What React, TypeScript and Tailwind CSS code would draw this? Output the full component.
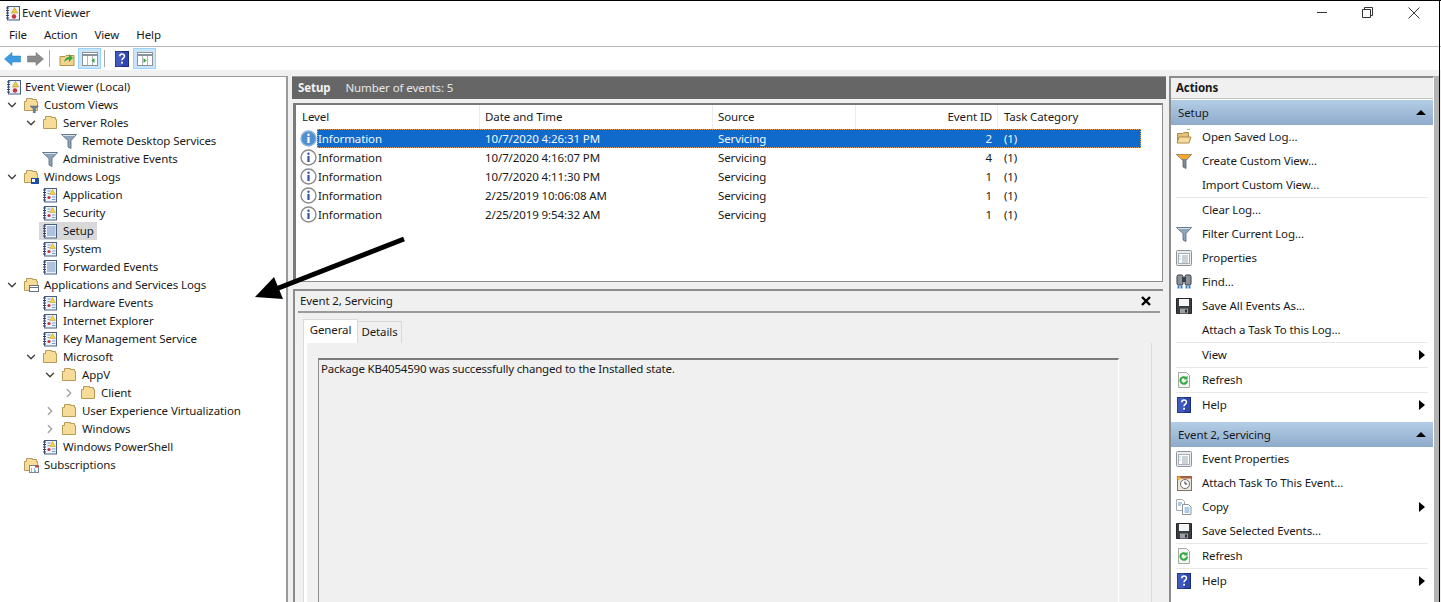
import { ChevronDown, ChevronRight } from "lucide-react";

type IconName =
  | "viewer" | "folder" | "folderFilter" | "folderLog" | "folderApps" | "folderSubs"
  | "filter" | "filterOrange" | "log" | "logPlain" | "open" | "props" | "find"
  | "save" | "refresh" | "help" | "clock" | "copy" | "none";

function Icon({ name }: { name: IconName }) {
  const notebook = (
    <>
      <rect x="2.500" y="1.500" width="12" height="13.500" fill="#eef3fb" stroke="#4a5f84" />
      <path d="M1 3h3M1 5.500h3M1 8h3M1 10.500h3M1 13h3" stroke="#2f3f5e" />
    </>
  );
  const folder = (
    <path d="M1.500 4.500h2v-3h6v1h4v2h1v9h-13z" fill="#f7dc98" stroke="#b79a58" />
  );
  switch (name) {
    case "viewer":
      return (
        <svg width="16" height="16" viewBox="0 0 16 16">
          {notebook}
          <path d="M9.500 2.500l3 5.500h-6z" fill="#f5cf3a" stroke="#a8841a" strokeWidth="0.500" />
          <circle cx="9" cy="11.500" r="2.200" fill="#c8323a" />
        </svg>
      );
    case "log":
      return (
        <svg width="16" height="16" viewBox="0 0 16 16">
          {notebook}
          <path d="M5.500 4h3M5.500 6.500h2M10 10h3.500M10 12.500h3.500" stroke="#7d9cc7" />
          <path d="M10.500 2.500l2.800 5h-5.600z" fill="#f5d33f" stroke="#b8931f" strokeWidth="0.500" />
          <circle cx="7" cy="10.500" r="1.600" fill="#c6303a" />
        </svg>
      );
    case "logPlain":
      return (
        <svg width="16" height="16" viewBox="0 0 16 16">
          {notebook}
          <path d="M5 4h8.500M5 6h8.500M5 8h8.500M5 10h8.500M5 12h8.500" stroke="#6f90bf" />
        </svg>
      );
    case "folder":
      return (
        <svg width="16" height="16" viewBox="0 0 16 16">
          {folder}
        </svg>
      );
    case "folderFilter":
      return (
        <svg width="16" height="16" viewBox="0 0 16 16">
          {folder}
          <path d="M7 9h8.500l-3.200 3v4h-2v-4z" fill="#6f8198" stroke="#4b5c73" strokeWidth="0.500" />
        </svg>
      );
    case "folderLog":
      return (
        <svg width="16" height="16" viewBox="0 0 16 16">
          {folder}
          <rect x="8" y="9" width="8" height="6" fill="#1f4fa3" />
          <rect x="9" y="10" width="3" height="3" fill="#fff" />
        </svg>
      );
    case "folderApps":
      return (
        <svg width="16" height="16" viewBox="0 0 16 16">
          {folder}
          <rect x="6.500" y="8.500" width="9" height="6" fill="#fff" stroke="#68727f" />
          <path d="M7 10.500h8" stroke="#68727f" />
        </svg>
      );
    case "folderSubs":
      return (
        <svg width="16" height="16" viewBox="0 0 16 16">
          {folder}
          <rect x="6.500" y="8.500" width="9" height="7" fill="#fff" stroke="#7b8794" />
          <path d="M12 9.500h3.500" stroke="#d33" strokeWidth="2" />
          <path d="M8 12h1M11 12h1M8 14h1M11 14h2" stroke="#2f62b5" />
        </svg>
      );
    case "filter":
      return (
        <svg width="16" height="16" viewBox="0 0 16 16">
          <path d="M0.500 1.500h15l-5.500 6v8l-3-1.500v-6.500z" fill="#8ea4b8" stroke="#4f6478" strokeWidth="0.800" />
          <path d="M2 2.500h12" stroke="#d6e0ea" />
        </svg>
      );
    case "filterOrange":
      return (
        <svg width="16" height="16" viewBox="0 0 16 16">
          <path d="M0.500 1.500h15l-5.500 6v8l-3-1.500v-6.500z" fill="#7e8b98" stroke="#56636f" strokeWidth="0.800" />
          <path d="M1 1.500h14l-4 4.500h-6z" fill="#f7a72c" />
        </svg>
      );
    case "open":
      return (
        <svg width="16" height="16" viewBox="0 0 16 16">
          <path d="M1.500 4.500h5l1-1h5v9h-11z" fill="#e3c27a" stroke="#a98a4a" />
          <path d="M1 14l2-6h12l-2 6z" fill="#f4dc9e" stroke="#a98a4a" />
          <path d="M11 0.500h3" stroke="#6fcf6a" />
        </svg>
      );
    case "props":
      return (
        <svg width="16" height="16" viewBox="0 0 16 16">
          <rect x="0.500" y="0.500" width="15" height="15" rx="1" fill="#e9ebee" stroke="#8d949c" />
          <rect x="2.500" y="3.500" width="11" height="10" fill="#fff" stroke="#a8aeb5" />
          <path d="M6 6h6M6 8h6M6 10h6M6 12h6" stroke="#9aa3ad" />
          <path d="M3.500 6h1M3.500 9h1" stroke="#35a3e0" />
        </svg>
      );
    case "find":
      return (
        <svg width="16" height="16" viewBox="0 0 16 16">
          <rect x="1" y="1" width="6" height="10" rx="1.500" fill="#8b929b" stroke="#33393f" />
          <rect x="9" y="1" width="6" height="10" rx="1.500" fill="#8b929b" stroke="#33393f" />
          <rect x="6" y="3" width="4" height="5" fill="#39404a" />
          <path d="M1.500 13h5M9.500 13h5" stroke="#3a7fc0" strokeWidth="3" strokeDasharray="2 1" />
        </svg>
      );
    case "save":
      return (
        <svg width="16" height="16" viewBox="0 0 16 16">
          <path d="M0.500 0.500h15v15h-15z" fill="#3a3d42" stroke="#25272b" />
          <rect x="3" y="1" width="10" height="7" fill="#f4f5f6" />
          <rect x="4" y="10.500" width="8" height="5" fill="#9aa0a8" />
          <rect x="9" y="11.500" width="2" height="3" fill="#2c2f33" />
        </svg>
      );
    case "refresh":
      return (
        <svg width="16" height="16" viewBox="0 0 16 16">
          <path d="M2.500 0.500h8l3 3v12h-11z" fill="#f5f6f4" stroke="#a4aaa4" />
          <path d="M11 8.500a3.300 3.300 0 1 1-1-2.400" fill="none" stroke="#2fa53a" strokeWidth="2" />
          <path d="M11.500 3.800v3.700h-3.700z" fill="#2fa53a" />
        </svg>
      );
    case "help":
      return (
        <svg width="16" height="16" viewBox="0 0 16 16">
          <rect x="1.500" y="0.500" width="13" height="15" fill="#2f48b0" stroke="#1b2c78" />
          <rect x="1.500" y="0.500" width="6.500" height="15" fill="#5068c8" opacity="0.600" />
          <path d="M5.800 5.200c0-3 4.600-3 4.600 0 0 2-2.300 2-2.300 4" fill="none" stroke="#fff" strokeWidth="1.600" />
          <rect x="7.200" y="10.800" width="1.800" height="1.800" fill="#fff" />
        </svg>
      );
    case "clock":
      return (
        <svg width="16" height="16" viewBox="0 0 16 16">
          <rect x="1.500" y="1.500" width="14" height="14" fill="#ece6da" stroke="#7c756a" />
          <path d="M1.500 1.500h14v2h-14z" fill="#b5562f" />
          <circle cx="9" cy="9" r="4.500" fill="#fff" stroke="#6d6d6d" />
          <path d="M9 6.500V9h2.200" fill="none" stroke="#333" />
          <path d="M3 0.500l1 2 2 .5-2 1-1 2-1-2-2-1 2-.5z" fill="#f7b52c" />
        </svg>
      );
    case "copy":
      return (
        <svg width="16" height="16" viewBox="0 0 16 16">
          <path d="M0.500 0.500h6l2 2v9h-8z" fill="#fff" stroke="#a5abb3" />
          <path d="M6.500 5.500h6l2.500 2.500v7.500h-8.500z" fill="#fff" stroke="#8c939c" />
          <path d="M2 4h4M2 6h3M8.500 9h5M8.500 11h5M8.500 13h5" stroke="#5b9bd5" />
        </svg>
      );
    default:
      return <span className="inline-block w-4 h-4" />;
  }
}

type TreeRow = { label: string; icon: IconName; depth: number; toggle?: "open" | "closed"; selected?: boolean };

const tree: TreeRow[] = [
  { label: "Event Viewer (Local)", icon: "viewer", depth: -1 },
  { label: "Custom Views", icon: "folderFilter", depth: 0, toggle: "open" },
  { label: "Server Roles", icon: "folder", depth: 1, toggle: "open" },
  { label: "Remote Desktop Services", icon: "filter", depth: 2 },
  { label: "Administrative Events", icon: "filter", depth: 1 },
  { label: "Windows Logs", icon: "folderLog", depth: 0, toggle: "open" },
  { label: "Application", icon: "log", depth: 1 },
  { label: "Security", icon: "log", depth: 1 },
  { label: "Setup", icon: "logPlain", depth: 1, selected: true },
  { label: "System", icon: "log", depth: 1 },
  { label: "Forwarded Events", icon: "logPlain", depth: 1 },
  { label: "Applications and Services Logs", icon: "folderApps", depth: 0, toggle: "open" },
  { label: "Hardware Events", icon: "log", depth: 1 },
  { label: "Internet Explorer", icon: "log", depth: 1 },
  { label: "Key Management Service", icon: "log", depth: 1 },
  { label: "Microsoft", icon: "folder", depth: 1, toggle: "open" },
  { label: "AppV", icon: "folder", depth: 2, toggle: "open" },
  { label: "Client", icon: "folder", depth: 3, toggle: "closed" },
  { label: "User Experience Virtualization", icon: "folder", depth: 2, toggle: "closed" },
  { label: "Windows", icon: "folder", depth: 2, toggle: "closed" },
  { label: "Windows PowerShell", icon: "log", depth: 1 },
  { label: "Subscriptions", icon: "folderSubs", depth: 0 },
];

const indent: Record<number, string> = {
  [-1]: "pl-[3px]",
  0: "pl-[5px]",
  1: "pl-[24px]",
  2: "pl-[43px]",
  3: "pl-[62px]",
};

function TreeItem({ row }: { row: TreeRow }) {
  return (
    <div className={`h-[18px] flex items-center ${indent[row.depth]}`}>
      {row.depth >= 0 && (
        <span className="w-[15px] h-[18px] flex items-center shrink-0">
          {row.toggle === "open" && <ChevronDown size={14} strokeWidth={2.4} className="text-[#404040]" />}
          {row.toggle === "closed" && <ChevronRight size={14} strokeWidth={2.2} className="text-[#a0a0a0]" />}
        </span>
      )}
      <span className={`flex items-center h-[18px] pl-[3px] pr-[3px] ${row.selected ? "bg-[#d9d9d9]" : ""}`}>
        <span className={`w-[16px] h-[16px] shrink-0 flex items-center ${row.depth === -1 ? "mr-0" : "mr-[2px]"}`}>
          <Icon name={row.icon} />
        </span>
        <span className="pl-[3px] leading-[18px] whitespace-nowrap">{row.label}</span>
      </span>
    </div>
  );
}

const events = [
  ["10/7/2020 4:26:31 PM", "2"],
  ["10/7/2020 4:16:07 PM", "4"],
  ["10/7/2020 4:11:30 PM", "1"],
  ["2/25/2019 10:06:08 AM", "1"],
  ["2/25/2019 9:54:32 AM", "1"],
];

function InfoIcon({ selected }: { selected: boolean }) {
  return (
    <svg width="17" height="17" viewBox="0 0 17 17" className="shrink-0">
      <circle cx="8.500" cy="8.500" r="7.500" fill={selected ? "#4f8fd0" : "#fff"} stroke={selected ? "#8fb4da" : "#8a8a8a"} strokeWidth="1.400" />
      <circle cx="8.500" cy="4.700" r="1.200" fill={selected ? "#fff" : "#3a55a8"} />
      <rect x="7.400" y="7" width="2.200" height="6" fill={selected ? "#fff" : "#3a55a8"} />
    </svg>
  );
}

type ActionRow = { label?: string; icon?: IconName; more?: boolean; sep?: boolean };

const setupActions: ActionRow[] = [
  { label: "Open Saved Log...", icon: "open" },
  { label: "Create Custom View...", icon: "filterOrange" },
  { label: "Import Custom View..." },
  { sep: true },
  { label: "Clear Log..." },
  { label: "Filter Current Log...", icon: "filter" },
  { label: "Properties", icon: "props" },
  { label: "Find...", icon: "find" },
  { label: "Save All Events As...", icon: "save" },
  { label: "Attach a Task To this Log..." },
  { sep: true },
  { label: "View", more: true },
  { sep: true },
  { label: "Refresh", icon: "refresh" },
  { sep: true },
  { label: "Help", icon: "help", more: true },
];

const eventActions: ActionRow[] = [
  { label: "Event Properties", icon: "props" },
  { label: "Attach Task To This Event...", icon: "clock" },
  { label: "Copy", icon: "copy", more: true },
  { label: "Save Selected Events...", icon: "save" },
  { sep: true },
  { label: "Refresh", icon: "refresh" },
  { sep: true },
  { label: "Help", icon: "help", more: true },
];

function ActionList({ rows }: { rows: ActionRow[] }) {
  return (
    <div>
      {rows.map((r, i) =>
        r.sep ? (
          <div key={i} className="h-[1px] mx-[5px] bg-[#e8e8e8]" />
        ) : (
          <div key={i} className="h-[24px] flex items-center pl-[5px] pr-[8px]">
            <span className="w-[16px] h-[16px] flex items-center shrink-0">
              {r.icon && <Icon name={r.icon} />}
            </span>
            <span className="ml-[10px] flex-1 whitespace-nowrap">{r.label}</span>
            {r.more && <span className="w-0 h-0 border-y-[5px] border-y-transparent border-l-[6px] border-l-black" />}
          </div>
        ),
      )}
    </div>
  );
}

function ActionBand({ label }: { label: string }) {
  return (
    <div className="h-[25px] flex items-center justify-between pl-[7px] pr-[7px] bg-gradient-to-b from-[#b4cde6] to-[#8fabcb]">
      <span>{label}</span>
      <span className="w-0 h-0 border-x-[5px] border-x-transparent border-b-[5px] border-b-black" />
    </div>
  );
}

export default function App() {
  return (
    <div className="relative w-[1441px] h-[602px] overflow-hidden bg-white text-[11.5px] tracking-[-0.1px] text-[#1a1a1a] font-['Noto_Sans','Open_Sans',sans-serif] flex flex-col">
      {/* Title bar */}
      <div className="h-[24px] border-t border-black flex items-center shrink-0">
        <span className="ml-[5px] mr-[1px] flex"><Icon name="viewer" /></span>
        <span className="pt-[1px]">Event Viewer</span>
        <div className="ml-auto flex items-center gap-[35px] pr-[21px]">
          <span className="w-[10px] h-[1px] bg-[#333]" />
          <svg width="11" height="11" viewBox="0 0 11 11"><path d="M2.500 2.500V.5h8v8h-2M.5 2.500h8v8h-8z" fill="none" stroke="#333" /></svg>
          <svg width="12" height="12" viewBox="0 0 12 12"><path d="M.5.5l11 11M11.500.5l-11 11" stroke="#333" /></svg>
        </div>
      </div>
      {/* Menu */}
      <div className="h-[23px] flex items-center gap-[17px] pl-[9px] border-b border-[#b8b8b8] shrink-0">
        <span>File</span><span>Action</span><span>View</span><span>Help</span>
      </div>
      {/* Toolbar */}
      <div className="h-[23px] flex items-center pl-[4px] shrink-0">
        <svg width="17" height="14" viewBox="0 0 17 14"><path d="M0.500 7l7.500-6.500v3.500h8.500v6h-8.500v3.500z" fill="#3d9be0" stroke="#2a78b8" strokeWidth="0.500" /></svg>
        <svg width="17" height="14" viewBox="0 0 17 14" className="ml-[6px]"><path d="M16.500 7l-7.500-6.500v3.500h-8.500v6h8.500v3.500z" fill="#8a8a8a" stroke="#6e6e6e" strokeWidth="0.500" /></svg>
        <span className="w-[1px] h-[17px] bg-[#a8a8a8] ml-[5px] mr-[9px]" />
        <span className="flex w-[16px]">
          <svg width="16" height="16" viewBox="0 0 16 16"><path d="M1 14.500v-9h5l1-1h8v10z" fill="#f1d58c" stroke="#b2954f" /><path d="M5 11c1-4 3-5 5-5V3l4 4-4 4V8.500c-2 0-3 1-5 2.500z" fill="#3aa54a" /></svg>
        </span>
        <span className="ml-[3px] w-[23px] h-[21px] flex items-center justify-center bg-[#cce4f7] border border-[#99d1ff]">
          <svg width="16" height="14" viewBox="0 0 16 14"><rect x="0.500" y="0.500" width="15" height="13" fill="#fff" stroke="#8a929a" /><path d="M1 3h14" stroke="#8a929a" strokeWidth="2" /><path d="M5.500 4v9M10.500 4v9" stroke="#b0b6bc" /><path d="M12.500 6v5l-3-2.500z" fill="#2fa53a" /></svg>
        </span>
        <span className="w-[1px] h-[17px] bg-[#a8a8a8] ml-[3px] mr-[9px]" />
        <span className="flex w-[16px]"><Icon name="help" /></span>
        <span className="ml-[3px] w-[23px] h-[21px] flex items-center justify-center bg-[#cce4f7] border border-[#99d1ff]">
          <svg width="16" height="14" viewBox="0 0 16 14"><rect x="0.500" y="0.500" width="15" height="13" fill="#fff" stroke="#8a929a" /><path d="M1 3h14" stroke="#8a929a" strokeWidth="2" /><path d="M5.500 4v9M10.500 4v9" stroke="#b0b6bc" /><path d="M6.500 6v5l3-2.500z" fill="#2fa53a" /></svg>
        </span>
      </div>
      {/* Panes */}
      <div className="flex-1 min-h-0 bg-[#f0f0f0] pt-[6px] flex">
        {/* Tree */}
        <div className="w-[288px] shrink-0 bg-white border-t border-r-2 border-[#9a9a9a] pt-[1px]">
          {tree.map((row) => (
            <TreeItem key={row.label} row={row} />
          ))}
        </div>
        {/* Centre */}
        <div className="ml-[4px] w-[874px] shrink-0 flex flex-col border-t border-[#9a9a9a]">
          <div className="h-[22px] shrink-0 bg-[#666666] text-white flex items-center pl-[6px]">
            <b className="font-bold text-[#f2f2f2]">Setup</b>
            <span className="ml-[15px] text-[#e6e6e6]">Number of events: 5</span>
          </div>
          <div className="mt-[4px] ml-[1px] mr-[3px] h-[179px] shrink-0 bg-white border border-[#8c8c8c] border-t-2 border-l-[3px] border-t-[#7a7a7a] border-l-[#7a7a7a]">
            <div className="grid grid-cols-[183px_233px_143px_143px_1fr] h-[24px] items-center">
              <span className="pl-[6px]">Level</span>
              <span className="pl-[5px] h-full flex items-center border-l border-[#ececec]">Date and Time</span>
              <span className="pl-[5px] h-full flex items-center border-l border-[#ececec]">Source</span>
              <span className="pr-[5px] h-full flex items-center justify-end border-l border-r border-[#ececec]">Event ID</span>
              <span className="pl-[6px]">Task Category</span>
            </div>
            <div className="w-[845px]">
              {events.map(([when, id], i) => (
                <div key={when} className="h-[19px] flex items-center relative pl-[4px]">
                  <InfoIcon selected={i === 0} />
                  <div className={`flex-1 h-[19px] grid grid-cols-[162px_233px_143px_143px_1fr] items-center ${i === 0 ? "bg-[#0f6acb] text-[#f4f8fd] outline-1 -outline-offset-1 outline-dotted outline-[#e0a060]" : ""}`}>
                    <span className="pl-[1px]">Information</span>
                    <span className="pl-[6px]">{when}</span>
                    <span className="pl-[6px]">Servicing</span>
                    <span className="pr-[6px] text-right">{id}</span>
                    <span className="pl-[6px]">(1)</span>
                  </div>
                </div>
              ))}
            </div>
          </div>
          {/* Detail */}
          <div className="mt-[7px] flex-1 min-h-0 border-t-2 border-l-2 border-[#8c8c8c] ml-[1px] mr-[3px] bg-[#f0f0f0]">
            <div className="h-[20px] mx-[3px] border-b-2 border-[#9a9a9a] box-content flex items-center justify-between pl-[2px] pr-[9px]">
              <span>Event 2, Servicing</span>
              <svg width="10" height="10" viewBox="0 0 10 10"><path d="M1 1l8 8M9 1l-8 8" stroke="#000" strokeWidth="2.400" /></svg>
            </div>
            <div className="ml-[8px] mr-[11px] mt-[6px] flex items-end">
              <span className="h-[24px] w-[55px] flex items-center justify-center pb-[4px] bg-white border border-b-0 border-[#d9d9d9]">General</span>
              <span className="h-[22px] w-[44px] flex items-center justify-center pb-[2px] border border-l-0 border-b-0 border-[#d9d9d9] bg-[#f0f0f0]">Details</span>
            </div>
            <div className="ml-[8px] mr-[11px] bg-white border border-t-0 border-[#dcdcdc] pl-[3px] h-[300px]">
              <div className="h-full bg-[#f0f0f0] pl-[11px] pr-[32px] pt-[15px]">
                <div className="h-[300px] border-t-2 border-l border-r border-t-[#7a7a7a] border-l-[#8c8c8c] border-r-white pl-[2px] leading-[17px] tracking-[-0.2px]">
                  Package KB4054590 was successfully changed to the Installed state.
                </div>
              </div>
            </div>
          </div>
        </div>
        {/* Actions */}
        <div className="ml-[3px] w-[265px] shrink-0 bg-white border-t-2 border-l-2 border-r border-[#8c8c8c] border-r-white">
          <div className="h-[21px] bg-[#f0f0f0] flex items-center pl-[5px] font-bold border-b border-[#c4c4c4]">Actions</div>
          <div className="mt-[1px]">
            <ActionBand label="Setup" />
            <ActionList rows={setupActions} />
          </div>
          <div className="mt-[5px]">
            <ActionBand label="Event 2, Servicing" />
            <ActionList rows={eventActions} />
          </div>
        </div>
        <div className="w-[5px] shrink-0 bg-[#b4b4b4]" />
        <div className="w-[1px] shrink-0 bg-black" />
      </div>
      {/* Right window edge above the panes */}
      <div className="absolute top-0 left-[1439px] w-[1px] h-[76px] bg-black" />
      {/* Annotation arrow */}
      <svg width="1441" height="602" viewBox="0 0 1441 602" className="absolute inset-0 pointer-events-none">
        <path d="M404 239L276 289" stroke="#000" strokeWidth="5" />
        <path d="M255 297L274 277L283 299z" fill="#000" />
      </svg>
    </div>
  );
}
